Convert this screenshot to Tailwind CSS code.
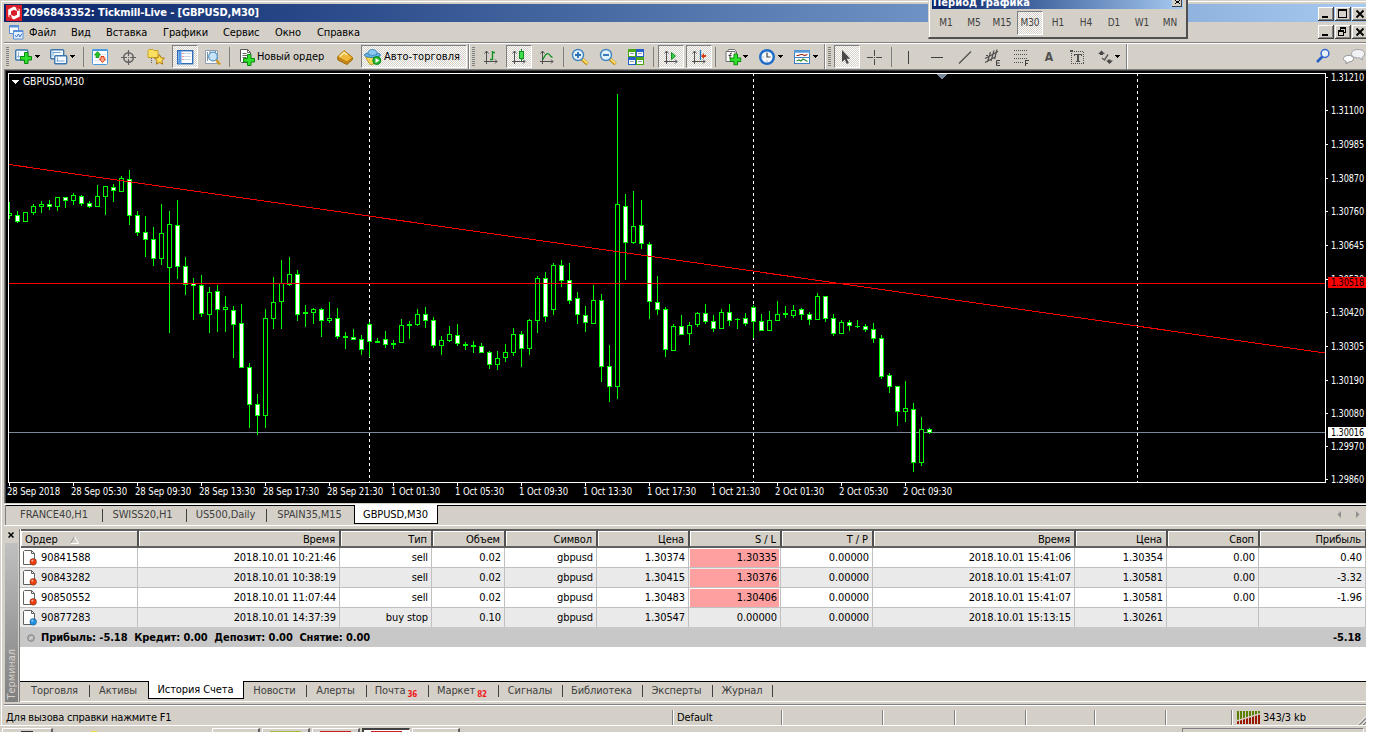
<!DOCTYPE html>
<html lang="ru">

<head>
  <meta charset="UTF-8">
  <meta name="viewport" content="width=device-width, initial-scale=1.0">
  <script src="https://cdn.jsdelivr.net/npm/@tailwindcss/browser@4"></script>
  <title>2096843352: Tickmill-Live - [GBPUSD,M30]</title>
</head>

<body class="bg-white w-[1374px] h-[732px] overflow-hidden text-black text-[11px] leading-[14px] tracking-[-0.1px] font-['DejaVu_Sans_Condensed','DejaVu_Sans',sans-serif] [font-stretch:condensed]">

  <!-- shared icons -->
  <svg class="hidden">
    <symbol id="arrow" viewBox="0 0 6 4"><path d="M0 0h5v1h-5zM1 1h3v1h-3zM2 2h1v1h-1z" fill="#000" shape-rendering="crispEdges" /></symbol>
    <symbol id="plus" viewBox="0 0 12 12"><path d="M4.500 .5h3.500v4h3.500v3.500h-3.500v3.500h-3.500v-3.500h-4v-3.500h4z" fill="#2fe02f" stroke="#0a8a0a" /></symbol>
    <symbol id="axes" viewBox="0 0 18 18"><path d="M4.500 3v13M2 13.500h13M2.500 5.500l2-2.500 2 2.500M13 11.500l2 2-2 2" fill="none" stroke="#505050" /></symbol>
  </svg>

  <div class="relative w-[1366px] h-[732px] bg-[#d4d0c8] flex flex-col overflow-hidden">
    <div class="h-[725px] pl-1 pt-1 flex flex-col shadow-[inset_1px_1px_#d4d0c8,inset_2px_2px_#fff]">

      <!-- title bar -->
      <div class="h-[18px] shrink-0 flex items-center bg-linear-to-r from-[#0a246a] to-[#a6caf0] text-white">
        <svg class="ml-[2px] w-4 h-4" viewBox="0 0 16 16">
          <rect width="16" height="16" fill="#d81e28" />
          <path d="M8 1.500L13.800 4.500V11.500L8 14.500L2.200 11.500V4.500Z" fill="#fff" />
          <path d="M8 4.700L11 6.300V9.700L8 11.300L5 9.700V6.300Z" fill="#d81e28" />
          <path d="M9.500 1l4 4.500-2.500.5zM6.500 15l-4-4.500 2.500-.5z" fill="#d81e28" />
        </svg>
        <span class="ml-px font-bold whitespace-nowrap">2096843352: Tickmill-Live - [GBPUSD,M30]</span>
        <div class="ml-auto flex gap-[1px] mt-[1px]">
          <svg class="w-4 h-[14px]" viewBox="0 0 16 14" shape-rendering="crispEdges"><path d="M0 0h16v14H0z" fill="#404040" /><path d="M0 0h15v13H0z" fill="#fff" /><path d="M1 1h14v12H1z" fill="#808080" /><path d="M1 1h13v11H1z" fill="#d4d0c8" /><path d="M4 9h6v2H4z" /></svg>
          <svg class="w-4 h-[14px]" viewBox="0 0 16 14" shape-rendering="crispEdges"><path d="M0 0h16v14H0z" fill="#404040" /><path d="M0 0h15v13H0z" fill="#fff" /><path d="M1 1h14v12H1z" fill="#808080" /><path d="M1 1h13v11H1z" fill="#d4d0c8" /><path d="M3 2h9v9H3zM4 4v6h7V4z" fill-rule="evenodd" /></svg>
          <svg class="w-[14px] h-[14px]" viewBox="0 0 14 14" shape-rendering="crispEdges"><path d="M0 0h14v14H0z" fill="#404040" /><path d="M0 0h14v13H0z" fill="#fff" /><path d="M1 1h13v12H1z" fill="#808080" /><path d="M1 1h13v11H1z" fill="#d4d0c8" /><path d="M4.500 3.500l7 7M11.500 3.500l-7 7" stroke="#000" stroke-width="1.800" shape-rendering="auto" /></svg>
        </div>
      </div>

      <!-- menu -->
      <div class="h-[20px] shrink-0 flex items-center whitespace-nowrap">
        <svg class="ml-[5px] w-[15px] h-[15px]" viewBox="0 0 15 15"><path d="M.5 .5h9v8h-9z" fill="#fff" stroke="#5b8fd8" /><path d="M.5 1.500h9" stroke="#5b8fd8" stroke-width="2" /><path d="M4.500 5.500h9.500v8.500h-9.500z" fill="#e8f2ff" stroke="#5b8fd8" /><path d="M4.500 6h9.500" stroke="#5b8fd8" stroke-width="2" /><path d="M6 10l1.500 2 2-3 1.500 3 2-3.500" fill="none" stroke="#3a78d0" /></svg>
        <div class="w-[42px] ml-[5px] pt-[2px]">Файл</div>
        <div class="w-[35px] pt-[2px]">Вид</div>
        <div class="w-[57px] pt-[2px]">Вставка</div>
        <div class="w-[60px] pt-[2px]">Графики</div>
        <div class="w-[52px] pt-[2px]">Сервис</div>
        <div class="w-[42px] pt-[2px]">Окно</div>
        <div class="pt-[2px]">Справка</div>
        <div class="ml-auto flex gap-[1px]">
          <svg class="w-4 h-[14px]" viewBox="0 0 16 14" shape-rendering="crispEdges"><path d="M0 0h16v14H0z" fill="#404040" /><path d="M0 0h15v13H0z" fill="#fff" /><path d="M1 1h14v12H1z" fill="#808080" /><path d="M1 1h13v11H1z" fill="#d4d0c8" /><path d="M4 9h6v2H4z" /></svg>
          <svg class="w-4 h-[14px]" viewBox="0 0 16 14" shape-rendering="crispEdges"><path d="M0 0h16v14H0z" fill="#404040" /><path d="M0 0h15v13H0z" fill="#fff" /><path d="M1 1h14v12H1z" fill="#808080" /><path d="M1 1h13v11H1z" fill="#d4d0c8" /><path d="M5 2h6v6H9V7h1V4H6v1H5z" /><path d="M3 5h6v6H3zM4 7v3h4V7z" fill-rule="evenodd" /></svg>
          <svg class="w-[14px] h-[14px]" viewBox="0 0 14 14" shape-rendering="crispEdges"><path d="M0 0h14v14H0z" fill="#404040" /><path d="M0 0h14v13H0z" fill="#fff" /><path d="M1 1h13v12H1z" fill="#808080" /><path d="M1 1h13v11H1z" fill="#d4d0c8" /><path d="M4.500 3.500l7 7M11.500 3.500l-7 7" stroke="#000" stroke-width="1.800" shape-rendering="auto" /></svg>
        </div>
      </div>
      <div class="h-[2px] shrink-0 border-t border-[#808080] bg-white"></div>

      <!-- toolbar -->
      <div class="h-[25px] shrink-0 flex items-center whitespace-nowrap [&>*]:shrink-0">
        <div class="ml-[2px] w-[3px] h-5 bg-[repeating-linear-gradient(#808080_0_1px,#d4d0c8_1px_2px)]"></div>
        <!-- new chart -->
        <svg class="ml-[6px] w-[18px] h-[18px]" viewBox="0 0 18 18"><rect x=".7" y="2" width="12" height="10" rx="1" fill="#f4faff" stroke="#3f78b0" stroke-width="1.400" /><path d="M3.500 4v6M2 8.500h8" stroke="#8ab4dc" /><use href="#plus" x="5" y="4" width="12" height="12" /></svg>
        <svg class="ml-[2px] w-[6px] h-1"><use href="#arrow" /></svg>
        <!-- profiles -->
        <svg class="ml-[9px] w-[18px] h-[18px]" viewBox="0 0 18 18"><rect x=".7" y="1.700" width="13" height="9" rx="1" fill="#f4faff" stroke="#3f78b0" stroke-width="1.400" /><path d="M3 3.500v5M2.500 4.500h8" stroke="#7aa8d4" /><rect x="4.700" y="7.700" width="12" height="8" rx="1" fill="#f4faff" stroke="#3f78b0" stroke-width="1.400" /><path d="M7.500 9.500v4M6.500 13h8" stroke="#7aa8d4" /></svg>
        <svg class="ml-[2px] w-[6px] h-1"><use href="#arrow" /></svg>
        <div class="ml-[7px] w-px h-5 bg-[#808080]"></div>
        <!-- market watch -->
        <svg class="ml-[7px] w-[18px] h-[18px]" viewBox="0 0 18 18"><rect x="1.500" y="1.500" width="15" height="15" rx="1" fill="#fff" stroke="#4a9be0" /><path d="M1.500 2h15" stroke="#4a9be0" stroke-width="2" /><path d="M3 6.500h12M3 9.500h12M3 12.500h12" stroke="#dce8f4" /><path d="M6.500 3.500l3 3.500h-1.500v2.500h-3V7h-1.500z" fill="#22c722" stroke="#0b8a0b" stroke-width=".7" /><path d="M11.500 14.500l3-3.500h-1.500V8.500h-3V11h-1.500z" fill="#ffb090" stroke="#e03a10" /></svg>
        <!-- data window -->
        <svg class="ml-[10px] w-[18px] h-[18px]" viewBox="0 0 18 18"><circle cx="9.500" cy="9.500" r="4.800" fill="none" stroke="#606060" stroke-width="1.500" /><path d="M9.500 2v6M9.500 11v6M2 9.500h6M11 9.500h6M9 9.500h1" stroke="#606060" stroke-width="1.200" /></svg>
        <!-- navigator -->
        <svg class="ml-[10px] w-[18px] h-[18px]" viewBox="0 0 18 18"><path d="M1 2.500l1-1h4l1 1h4v7H1z" fill="#fbdf60" stroke="#c8a020" /><path d="M4.500 10v6" stroke="#606060" stroke-dasharray="1 1" /><path d="M12.500 6.500l1.500 3.300 3.500.4-2.600 2.400.7 3.600-3.100-1.800-3.100 1.800.7-3.600L7.500 10.200l3.500-.4z" fill="#ffe25a" stroke="#b07a10" /></svg>
        <!-- terminal -->
        <div class="ml-[7px] w-[26px] h-[23px] border border-t-[#808080] border-l-[#808080] border-b-white border-r-white bg-[repeating-conic-gradient(#fff_0_25%,#d4d0c8_0_50%)] bg-[length:2px_2px] flex items-center justify-center">
          <svg class="w-[18px] h-[18px]" viewBox="0 0 18 18"><rect x="1.700" y="2.700" width="15" height="13" fill="#fff" stroke="#2f6cb8" stroke-width="1.400" /><path d="M4 3v13" stroke="#5a9ae8" stroke-width="3" /><path d="M8 5.500h7M8 8.500h7M8 11.500h7" stroke="#c4d6e8" /><path d="M6.500 5.500h1M6.500 8.500h1M6.500 11.500h1" stroke="#d03030" /></svg>
        </div>
        <!-- tester -->
        <svg class="ml-[6px] w-[18px] h-[18px]" viewBox="0 0 18 18"><path d="M1.500 2.500h12v13h-12z" fill="#f8fafc" stroke="#90a0b0" /><path d="M3.500 4v9M6 3v4M11.500 3v3" stroke="#7f8fa0" /><path d="M12 12l4 4.500" stroke="#d09a20" stroke-width="2.500" /><circle cx="9" cy="8.500" r="4.300" fill="#c8e4f8" stroke="#5c9ac8" stroke-width="1.300" /></svg>
        <div class="ml-[7px] w-px h-5 bg-[#808080]"></div>
        <!-- new order -->
        <svg class="ml-[9px] w-[18px] h-[20px]" viewBox="0 0 18 20"><path d="M1.500 2.500h7l3 3v10h-9l-1-1z" fill="#fff" stroke="#555" /><path d="M8.500 2.500v3h3M3.500 6.500h4M3.500 8.500h6M3.500 10.500h4" fill="none" stroke="#666" /><use href="#plus" x="4" y="7" width="12" height="12" /></svg>
        <div class="w-[68px]">Новый ордер</div>
        <!-- meta editor -->
        <svg class="ml-[11px] w-[18px] h-[18px]" viewBox="0 0 18 18"><path d="M1.500 9.500L8 3l8.500 6.500v2L11 16.500 2 12z" fill="#c88a18" stroke="#a06808" stroke-linejoin="round" /><path d="M1.500 9L8 2.500l8.500 7-5.500 4.500z" fill="#f0b838" stroke="#b87c10" stroke-linejoin="round" /><path d="M4 8.500L8 4.500l3 2.500" fill="none" stroke="#fff0b0" stroke-width="1.500" /></svg>
        <!-- auto trading -->
        <div class="ml-[7px] w-[106px] h-[23px] border border-t-[#808080] border-l-[#808080] border-b-white border-r-white bg-[repeating-conic-gradient(#fff_0_25%,#d4d0c8_0_50%)] bg-[length:2px_2px] flex items-center">
          <svg class="ml-[2px] w-[18px] h-[18px]" viewBox="0 0 18 18"><path d="M1.500 9h13l-4.500 7-4 .5z" fill="#f6d75c" stroke="#c09820" /><ellipse cx="8.500" cy="7" rx="8" ry="2.500" fill="#6cb4e4" stroke="#2f80b8" /><path d="M4 6.500Q4 1.500 8.500 1.500T13 6.500Q8.500 8.500 4 6.500z" fill="#8cc8f0" stroke="#3f8cc4" /><circle cx="12.800" cy="12.500" r="4" fill="#22b52c" stroke="#0e8a18" /><path d="M11.500 10v5l4-2.500z" fill="#fff" /></svg>
          <span class="ml-[2px] tracking-[0.05px]">Авто-торговля</span>
        </div>
        <div class="ml-px w-[2px] h-[25px] bg-white border-l border-[#808080]"></div>
        <div class="ml-[2px] w-[3px] h-5 bg-[repeating-linear-gradient(#808080_0_1px,#d4d0c8_1px_2px)]"></div>
        <!-- chart kinds -->
        <svg class="ml-[7px] w-[18px] h-[18px]" viewBox="0 0 18 18"><use href="#axes" /><path d="M10.500 3v9M8 11.500h2.500M10.500 4.500h2.500" fill="none" stroke="#109020" stroke-width="1.400" /></svg>
        <div class="ml-[6px] w-[26px] h-[23px] border border-t-[#808080] border-l-[#808080] border-b-white border-r-white bg-[repeating-conic-gradient(#fff_0_25%,#d4d0c8_0_50%)] bg-[length:2px_2px] flex items-center justify-center">
          <svg class="w-[18px] h-[18px]" viewBox="0 0 18 18"><use href="#axes" /><path d="M11.500 1v12" stroke="#109020" /><rect x="9.500" y="3.500" width="4" height="7" fill="#3be04a" stroke="#109020" /></svg>
        </div>
        <svg class="ml-[6px] w-[18px] h-[18px]" viewBox="0 0 18 18"><use href="#axes" /><path d="M5 11.500Q9 2 12.500 8l2 1.500" fill="none" stroke="#109020" stroke-width="1.300" /></svg>
        <div class="ml-[7px] w-px h-5 bg-[#808080]"></div>
        <!-- zoom -->
        <svg class="ml-[7px] w-[18px] h-[18px]" viewBox="0 0 18 18"><path d="M11 11l5.500 5" stroke="#b8860b" stroke-width="3.500" /><path d="M11.500 11l5 4.500" stroke="#ffe070" stroke-width="1.800" /><circle cx="7" cy="7" r="5.500" fill="#e2f2fc" stroke="#3f84bc" stroke-width="1.400" /><path d="M7 4v6M4 7h6" stroke="#2a70b0" stroke-width="1.800" /></svg>
        <svg class="ml-[10px] w-[18px] h-[18px]" viewBox="0 0 18 18"><path d="M11 11l5.500 5" stroke="#b8860b" stroke-width="3.500" /><path d="M11.500 11l5 4.500" stroke="#ffe070" stroke-width="1.800" /><circle cx="7" cy="7" r="5.500" fill="#e2f2fc" stroke="#3f84bc" stroke-width="1.400" /><path d="M4 7h6" stroke="#2a70b0" stroke-width="1.800" /></svg>
        <!-- tile windows -->
        <svg class="ml-[10px] w-[18px] h-[18px]" viewBox="0 0 18 18" shape-rendering="crispEdges"><path d="M1 1h8v8H1zM9 9h8v8H9z" fill="#4aa816" /><path d="M9 1h8v8H9zM1 9h8v8H1z" fill="#2560c8" /><path d="M2 4h6v4H2zM10 4h6v4h-6zM2 12h6v4H2zM10 12h6v4h-6z" fill="#fff" /><path d="M3 5h4v1H3zM11 5h4v1h-4zM3 13h4v1H3zM11 13h4v1h-4z" fill="#88a8b8" /></svg>
        <div class="ml-[8px] w-px h-5 bg-[#808080]"></div>
        <!-- auto scroll, chart shift -->
        <div class="ml-[4px] w-[26px] h-[23px] border border-t-[#808080] border-l-[#808080] border-b-white border-r-white bg-[repeating-conic-gradient(#fff_0_25%,#d4d0c8_0_50%)] bg-[length:2px_2px] flex items-center justify-center">
          <svg class="w-[18px] h-[18px]" viewBox="0 0 18 18"><use href="#axes" /><path d="M9.500 4.500v7l4-3.500z" fill="#38d048" stroke="#109020" /></svg>
        </div>
        <div class="ml-[2px] w-[26px] h-[23px] border border-t-[#808080] border-l-[#808080] border-b-white border-r-white bg-[repeating-conic-gradient(#fff_0_25%,#d4d0c8_0_50%)] bg-[length:2px_2px] flex items-center justify-center">
          <svg class="w-[18px] h-[18px]" viewBox="0 0 18 18"><use href="#axes" /><path d="M10.500 2v10" stroke="#1870b8" stroke-width="1.300" /><path d="M11 8l3-3v2h2v2h-2v2z" fill="#d83a10" /></svg>
        </div>
        <div class="ml-[3px] w-px h-5 bg-[#808080]"></div>
        <!-- indicators -->
        <svg class="ml-[8px] w-[18px] h-[20px]" viewBox="0 0 18 20"><path d="M4.500 2.500h6l2 2v10h-9.500v-9z" fill="#fff" stroke="#707070" /><path d="M2 4.500h9v10H2z" fill="#fff" stroke="#707070" /><path d="M8 6Q6 5.500 6 8v4M4.500 8.500h3" stroke="#444" fill="none" /><use href="#plus" x="5.500" y="6.500" width="12" height="12" /></svg>
        <svg class="ml-[1px] w-[6px] h-1"><use href="#arrow" /></svg>
        <!-- periods -->
        <svg class="ml-[9px] w-[18px] h-[18px]" viewBox="0 0 18 18"><circle cx="9" cy="9" r="6.800" fill="#f4f8fc" stroke="#1f6cc8" stroke-width="2.400" /><path d="M9 4.500V9h3.500" fill="none" stroke="#444" stroke-width="1.200" /><path d="M4.500 9h1M9 12.500v1" stroke="#888" /></svg>
        <svg class="ml-[2px] w-[6px] h-1"><use href="#arrow" /></svg>
        <!-- templates -->
        <svg class="ml-[9px] w-[18px] h-[18px]" viewBox="0 0 18 18"><rect x="1.500" y="2.500" width="15" height="13" fill="#fff" stroke="#3f80c0" /><path d="M1 3.500h16" stroke="#5a9ad8" stroke-width="2.500" /><path d="M3.500 7.500h2l2-1h2l2 1 3-1" fill="none" stroke="#a83020" stroke-width="1.200" /><path d="M1.500 9.500h15" stroke="#3f80c0" /><path d="M3.500 13l2.500-1 2 1 2-2 2 1 2.500 1.500" fill="none" stroke="#309030" stroke-width="1.200" /></svg>
        <svg class="ml-[2px] w-[6px] h-1"><use href="#arrow" /></svg>
        <div class="ml-[5px] w-[2px] h-[25px] bg-white border-l border-[#808080]"></div>
        <div class="ml-[2px] w-[3px] h-5 bg-[repeating-linear-gradient(#808080_0_1px,#d4d0c8_1px_2px)]"></div>
        <!-- cursor -->
        <div class="ml-[3px] w-[26px] h-[23px] border border-t-[#808080] border-l-[#808080] border-b-white border-r-white bg-[repeating-conic-gradient(#fff_0_25%,#d4d0c8_0_50%)] bg-[length:2px_2px] flex items-center justify-center">
          <svg class="w-[18px] h-[18px]" viewBox="0 0 18 18"><path d="M4 2v12l2.800-2.500 2 4.500 2-1-2-4.200h3.500z" fill="#484848" /></svg>
        </div>
        <svg class="ml-[5px] w-[18px] h-[18px]" viewBox="0 0 18 18"><path d="M9.500 2v6M9.500 11v6M2 9.500h6M11 9.500h6M9 9.500h1" stroke="#484848" /></svg>
        <div class="ml-[8px] w-px h-5 bg-[#808080]"></div>
        <!-- lines -->
        <svg class="ml-[7px] w-[18px] h-[18px]" viewBox="0 0 18 18"><path d="M9.500 3v13" stroke="#404040" /></svg>
        <svg class="ml-[11px] w-[18px] h-[18px]" viewBox="0 0 18 18"><path d="M3 9.500h12" stroke="#404040" /></svg>
        <svg class="ml-[10px] w-[18px] h-[18px]" viewBox="0 0 18 18"><path d="M3 15.500L15 3.500" stroke="#505050" stroke-width="1.200" /></svg>
        <svg class="ml-[10px] w-[18px] h-[18px]" viewBox="0 0 18 18"><path d="M1 10.500L14 3.500M1 14.500L12 8.500M3.500 14l3-10M7 13l3-10.500M10.500 11l2.500-9.500M2 7.500h2" stroke="#505050" stroke-width="1.200" /><path d="M16 12.500h-3.500v5H16M12.500 15h3" fill="none" stroke="#404040" /></svg>
        <svg class="ml-[11px] w-[18px] h-[18px]" viewBox="0 0 18 18" shape-rendering="crispEdges"><path d="M1 2.500h14M1 6.500h14M1 10.500h14M1 14.500h9" stroke="#505050" stroke-dasharray="1 1" /><path d="M12.500 18v-5.500H16M12.500 15.500H15" fill="none" stroke="#404040" /></svg>
        <div class="ml-[9px] w-[18px] text-center text-[12px] font-bold text-[#505050]">A</div>
        <svg class="ml-[10px] w-[18px] h-[18px]" viewBox="0 0 18 18" shape-rendering="crispEdges"><rect x="3.500" y="3.500" width="12" height="12" fill="none" stroke="#505050" stroke-dasharray="1 1" /><path d="M2 2h3v2H2zM6 6h8v2h-1V7h-2v6h1v1H8v-1h1V7H7v1H6z" fill="#505050" /></svg>
        <svg class="ml-[11px] w-[18px] h-[18px]" viewBox="0 0 18 18"><path d="M1 6l3.500-3.500L8 6H6v1H3V6zM9 12.500h2v-1h2.500v1H16L12.500 16z" fill="#484848" /><path d="M5 10l2.500 2L11 6.500" fill="none" stroke="#585858" stroke-width="1.400" /></svg>
        <svg class="w-[6px] h-1"><use href="#arrow" /></svg>
        <div class="ml-[5px] w-[2px] h-[25px] bg-white border-l border-[#808080]"></div>
        <svg class="ml-auto w-[18px] h-[18px]" viewBox="0 0 18 18"><path d="M7.500 8.500L2 14" stroke="#2860c8" stroke-width="2.600" /><circle cx="10" cy="5.500" r="3.900" fill="#e8f2fc" stroke="#3468cc" stroke-width="1.500" /></svg>
        <svg class="ml-[9px] w-6 h-[18px]" viewBox="0 0 24 18"><path d="M16 1.500c4 0 6.500 1.800 6.500 4.300 0 2-1.200 3-2.500 3.600l.5 2.600-3-2.100c-5 .3-8-1.600-8-4.100 0-2.500 2.500-4.300 6.500-4.300z" fill="#f2f2f4" stroke="#a0a0a8" /><path d="M6.500 7.500c3 0 5 1.200 5 3.200s-2 3.200-4.500 3.200L4 16l.3-2.500C2.500 13 1.500 12 1.500 10.700c0-2 2-3.200 5-3.200z" fill="#fff" stroke="#909098" /></svg>
      </div>

      <!-- chart -->
      <div class="h-[434px] shrink-0 border-t border-l border-[#808080]">
        <div class="h-[433px] border-t border-l border-[#404040] bg-black">
          <svg id="chart" class="block w-[1360px] h-[432px] text-[10px]" viewBox="6 71 1360 432" shape-rendering="crispEdges">
            <path d="M8.500 482.500V73.500H1325.500V482.500Z" fill="none" stroke="#fff" />
            <path d="M369.500 73V482M753.500 73V482M1137.500 73V482" stroke="#fff" stroke-dasharray="3 3" />
            <path d="M936 74h11l-5.500 5.500z" fill="#778899" />
            <path d="M9 432.500H1325" stroke="#778899" />
            <g id="candles"></g>
            <path d="M9 283.500H1325" stroke="#f00" />
            <path d="M9 164.500L1325 353" stroke="#f00" />
            <g id="axis" fill="#fff"></g>
            <path d="M1328 277h38v11h-38z" fill="#f00" />
            <path d="M1328 427h38v11h-38z" fill="#fff" />
            <text x="1331" y="286" textLength="33" lengthAdjust="spacingAndGlyphs">1.30518</text>
            <text x="1331" y="436" textLength="33" lengthAdjust="spacingAndGlyphs">1.30016</text>
            <path d="M12 80h7v1h-1v1h-1v1h-1v1h-1v-1h-1v-1h-1v-1h-1z" fill="#fff" />
            <text x="23" y="85" fill="#fff" textLength="61" lengthAdjust="spacingAndGlyphs">GBPUSD,M30</text>
          </svg>
        </div>
      </div>

      <!-- chart tabs -->
      <div class="h-[26px] shrink-0 pt-[1px]">
        <div class="h-px bg-white"></div>
        <div class="ml-px h-[20px] flex border-l border-[#808080] text-[#404040] text-center whitespace-nowrap">
          <div class="w-[97px] border-t border-black pt-[3px]"><span class="block h-[13px] border-r border-[#404040] leading-[12px]">FRANCE40,H1</span></div>
          <div class="w-[84px] border-t border-black pt-[3px]"><span class="block h-[13px] border-r border-[#404040] leading-[12px] pr-[4px]">SWISS20,H1</span></div>
          <div class="w-[80px] border-t border-black pt-[3px]"><span class="block h-[13px] border-r border-[#404040] leading-[12px] pr-[2px]">US500,Daily</span></div>
          <div class="w-[87px] border-t border-black pt-[3px] pr-[2px] leading-[12px]">SPAIN35,M15</div>
          <div class="w-[84px] h-[19px] bg-white text-black border-x border-b border-black leading-[19px] pr-px">GBPUSD,M30</div>
          <div class="grow border-t border-black flex items-center justify-end">
            <svg class="mr-[5px] mb-[3px] w-[24px] h-[7px]" viewBox="0 0 24 7"><path d="M4 0v7L.5 3.500zM19 0v7l3.500-3.500z" fill="#909090" /></svg>
          </div>
        </div>
        <div class="h-px bg-white"></div>
      </div>

      <!-- terminal -->
      <div class="h-[173px] shrink-0 flex">
        <div class="w-[15px] flex flex-col">
          <svg class="ml-[4px] mt-[3px] w-[6px] h-[6px]" viewBox="0 0 6 6"><path d="M.5 .5l5 5M5.500 .5l-5 5" stroke="#000" stroke-width="1.500" /></svg>
          <div class="ml-[1px] mt-[5px] w-[13px] h-[159px] bg-linear-to-b from-[#c0c0c0] to-[#808080] flex items-end text-[#d4d0c8]">
            <span class="[writing-mode:vertical-rl] rotate-180 leading-[13px] pt-[3px]">Терминал</span>
          </div>
        </div>
        <div class="w-[1347px] flex flex-col border-l border-[#808080]">
          <div class="h-[152px] bg-white">
            <table class="w-[1346px] table-fixed border-separate border-spacing-0 text-right whitespace-nowrap [&_td]:h-[20px] [&_td]:p-0 [&_td]:pr-[3px] [&_td]:border-r [&_td]:border-b [&_td]:border-[#c0c0c0] [&_th]:relative [&_th]:left-px [&_th]:h-[19px] [&_th]:p-0 [&_th]:pr-[4px] [&_th]:pt-[2px] [&_th]:leading-[12px] [&_th]:font-normal [&_th]:border-t-2 [&_th]:border-t-[#606060] [&_th]:border-r-2 [&_th]:border-r-[#505050] [&_th]:border-b-2 [&_th]:border-b-[#606060] [&_th]:bg-[#d4d0c8] [&_th]:shadow-[inset_1px_1px_#fff]">
              <colgroup>
                <col class="w-[118px]"><col class="w-[202px]"><col class="w-[92px]"><col class="w-[73px]"><col class="w-[92px]"><col class="w-[92px]"><col class="w-[92px]"><col class="w-[92px]"><col class="w-[202px]"><col class="w-[92px]"><col class="w-[92px]"><col class="w-[107px]">
              </colgroup>
              <thead>
                <tr>
                  <th><div class="flex items-center pl-[4px]">Ордер<svg class="ml-[12px] w-[9px] h-[8px]" viewBox="0 0 9 8"><path d="M4.500 .5L.5 7.500" stroke="#909090" /><path d="M4.500 .5l4 7h-8" fill="none" stroke="#fff" /></svg></div></th>
                  <th>Время</th>
                  <th>Тип</th>
                  <th>Объем</th>
                  <th>Символ</th>
                  <th>Цена</th>
                  <th>S / L</th>
                  <th>T / P</th>
                  <th>Время</th>
                  <th>Цена</th>
                  <th>Своп</th>
                  <th>Прибыль</th>
                </tr>
              </thead>
              <tbody id="orders"></tbody>
            </table>
            <div class="relative -mt-px h-[20px] bg-[#c8c8c8] flex items-center font-bold pt-px pr-[5px] whitespace-pre">
              <svg class="ml-[7px] mr-[6px] w-[8px] h-[8px]" viewBox="0 0 8 8"><circle cx="4" cy="4" r="3.300" fill="#b8b8b8" stroke="#808080" /><path d="M2.500 5.500l3-3" stroke="#e8e8e8" /></svg>
              <span class="tracking-[-0.08px]">Прибыль: -5.18  Кредит: 0.00  Депозит: 0.00  Снятие: 0.00</span>
              <span class="ml-auto">-5.18</span>
            </div>
          </div>
          <!-- terminal tabs -->
          <div class="h-[20px] flex text-[#404040] text-center whitespace-nowrap">
            <div class="w-[70px] border-t border-black pt-[3px]"><span class="block h-3 border-r border-[#404040] leading-[12px]">Торговля</span></div>
            <div class="w-[58px] border-t border-black pt-[3px]"><span class="block leading-[12px] pr-[2px]">Активы</span></div>
            <div class="w-[96px] h-[18px] bg-white text-black border-x border-b border-black leading-[18px] pr-px">История Счета</div>
            <div class="w-[63px] border-t border-black pt-[3px]"><span class="block h-3 border-r border-[#404040] leading-[12px] pr-px">Новости</span></div>
            <div class="w-[60px] border-t border-black pt-[3px]"><span class="block h-3 border-r border-[#404040] leading-[12px] pr-[2px]">Алерты</span></div>
            <div class="w-[62px] border-t border-black pt-[3px]"><span class="h-3 border-r border-[#404040] leading-[12px] flex justify-center gap-[2px] pr-[3px]">Почта<b class="text-[8px] text-[#f02020] pt-[4px]">36</b></span></div>
            <div class="w-[70px] border-t border-black pt-[3px]"><span class="h-3 border-r border-[#404040] leading-[12px] flex justify-center gap-[2px] pr-[3px]">Маркет<b class="text-[8px] text-[#f02020] pt-[4px]">82</b></span></div>
            <div class="w-[64px] border-t border-black pt-[3px]"><span class="block h-3 border-r border-[#404040] leading-[12px] pr-px">Сигналы</span></div>
            <div class="w-[80px] border-t border-black pt-[3px]"><span class="block h-3 border-r border-[#404040] leading-[12px] pr-[2px]">Библиотека</span></div>
            <div class="w-[70px] border-t border-black pt-[3px]"><span class="block h-3 border-r border-[#404040] leading-[12px] pr-[2px]">Эксперты</span></div>
            <div class="w-[60px] border-t border-black pt-[3px]"><span class="block h-3 border-r border-[#404040] leading-[12px] pr-px">Журнал</span></div>
            <div class="grow border-t border-black"></div>
          </div>
          <div class="h-px bg-white"></div>
        </div>
      </div>

      <!-- status bar -->
      <div class="mt-[2px] h-[2px] shrink-0 border-t border-[#808080] bg-white"></div>
      <div class="h-[19px] shrink-0 flex items-center whitespace-nowrap pt-[3px]">
        <div class="w-[668px] pl-[2px] pt-[2px] tracking-[-0.2px]">Для вызова справки нажмите F1</div>
        <div class="w-[109px] h-[15px] border-l border-[#808080] shadow-[inset_1px_0_#fff] pl-[4px] pt-[1px]">Default</div>
        <div class="w-[101px] h-[15px] border-l border-[#808080] shadow-[inset_1px_0_#fff]"></div>
        <div class="w-[72px] h-[15px] border-l border-[#808080] shadow-[inset_1px_0_#fff]"></div>
        <div class="w-[71px] h-[15px] border-l border-[#808080] shadow-[inset_1px_0_#fff]"></div>
        <div class="w-[69px] h-[15px] border-l border-[#808080] shadow-[inset_1px_0_#fff]"></div>
        <div class="w-[71px] h-[15px] border-l border-[#808080] shadow-[inset_1px_0_#fff]"></div>
        <div class="w-[66px] h-[15px] border-l border-[#808080] shadow-[inset_1px_0_#fff]"></div>
        <div class="grow h-[15px] border-l border-[#808080] shadow-[inset_1px_0_#fff] pl-[5px] flex items-center">
          <svg class="w-[23px] h-[13px]" viewBox="0 0 23 13"><path d="M0 0h23v2L0 9z" fill="#5a8000" /><path d="M0 10.500L23 3.500v9.500H0z" fill="#981800" /><path d="M2.500 0v13M5.500 0v13M8.500 0v13M11.500 0v13M14.500 0v13M17.500 0v13M20.500 0v13" stroke="#d4d0c8" /></svg>
          <span class="ml-[3px] pt-[2px]">343/3 kb</span>
          <svg class="ml-auto w-[8px] h-[9px] self-end" viewBox="0 0 8 9"><path d="M1 9l7-7M5 9l3-3" stroke="#808080" stroke-width="1.500" /><path d="M0 8.500l8-8M4 8.500l4-4" stroke="#fff" /></svg>
        </div>
      </div>
    </div>

    <!-- taskbar -->
    <div class="h-[7px] border-t border-white pt-[2px] flex overflow-hidden">
      <div class="ml-[2px] w-[51px] border-t border-l border-white border-r-2 border-r-[#606060] pt-[2px] px-[18px]"><div class="h-px bg-[#303030]"></div></div>
      <div class="ml-[38px] mt-[3px] w-[6px] h-[1px] bg-[#f0e040]"></div>
      <div class="ml-[115px] w-[48px] border-t border-l border-white border-r-2 border-r-[#606060]"></div>
      <div class="ml-[2px] w-[48px] border-t border-l border-white border-r-2 border-r-[#606060] pt-[2px] px-[7px]"><div class="h-px bg-[#a8b840]"></div></div>
      <div class="ml-[2px] w-[48px] border-t border-l border-white border-r-2 border-r-[#606060] pt-[2px] px-[7px]"><div class="h-px bg-[#c82020]"></div></div>
      <div class="ml-[2px] w-[48px] border-t-2 border-l-2 border-[#404040] border-r border-r-white bg-white pt-[1px] px-[7px]"><div class="h-px bg-[#c82020]"></div></div>
      <div class="ml-[2px] w-[48px] border-t border-l border-white border-r-2 border-r-[#606060]"></div>
      <div class="ml-auto mr-[2px] w-[182px] border-t border-l border-[#808080] border-r border-r-white"></div>
    </div>

    <!-- periods palette -->
    <div class="absolute left-[928px] top-0 w-[260px] h-[39px] bg-[#d4d0c8] border-l border-l-[#d4d0c8] border-r-2 border-r-[#505050] border-b-2 border-b-[#505050] shadow-[inset_1px_0_#fff] px-[3px]">
      <div class="h-[9px] overflow-hidden bg-linear-to-r from-[#0a246a] to-[#a6caf0] flex items-start justify-between">
        <span class="ml-px -mt-[4px] font-bold text-white whitespace-nowrap tracking-[0.05px]">Период графика</span>
        <svg class="mr-[1px] w-[10px] h-[7px]" viewBox="0 0 10 7" shape-rendering="crispEdges"><path d="M0 0h10v7H0z" fill="#404040" /><path d="M0 0h9v6H0z" fill="#d4d0c8" /><path d="M2.500 4.500l3-3 3 3M3 0l2.500 2L8 0" fill="none" stroke="#000" /></svg>
      </div>
      <div class="mt-[2px] grid grid-cols-[repeat(9,28px)] h-[23px] text-[10px] leading-[24px] text-center text-[#404040]">
        <div>M1</div>
        <div>M5</div>
        <div>M15</div>
        <div class="mx-px leading-[22px] border border-t-[#808080] border-l-[#808080] border-b-white border-r-white bg-[repeating-conic-gradient(#fff_0_25%,#d4d0c8_0_50%)] bg-[length:2px_2px]">M30</div>
        <div>H1</div>
        <div>H4</div>
        <div>D1</div>
        <div>W1</div>
        <div>MN</div>
      </div>
    </div>
  </div>

  <script>
    // high, body top, body bottom, low, falling; one bar every 8px
    const bars = [
      [202, 213, 216, 219, 0], [211, 215, 222, 223, 1], [212, 212, 222, 222, 0], [204, 206, 213, 215, 0], [201, 204, 207, 213, 0],
      [200, 204, 207, 210, 1], [197, 197, 207, 211, 0], [197, 197, 201, 208, 1], [193, 195, 201, 205, 0], [195, 196, 204, 206, 1],
      [201, 203, 207, 208, 1], [185, 196, 207, 207, 0], [186, 186, 197, 215, 0], [184, 187, 191, 202, 1], [176, 178, 192, 192, 0],
      [170, 179, 216, 225, 1], [211, 215, 233, 236, 1], [216, 232, 240, 257, 1], [227, 239, 259, 266, 1], [204, 233, 259, 265, 0],
      [211, 224, 268, 333, 0], [200, 225, 267, 279, 1], [257, 266, 285, 295, 1], [278, 283, 286, 320, 1], [275, 285, 314, 317, 1],
      [287, 292, 315, 333, 0], [285, 291, 310, 332, 1], [296, 307, 310, 332, 0], [306, 310, 325, 358, 1], [304, 323, 368, 368, 1],
      [363, 367, 405, 428, 1], [394, 404, 416, 435, 1], [309, 318, 416, 428, 0], [277, 302, 319, 329, 0], [260, 283, 302, 329, 0],
      [257, 274, 285, 286, 0], [270, 274, 315, 321, 1], [305, 312, 314, 327, 1], [308, 309, 313, 324, 0], [308, 309, 321, 337, 1],
      [302, 318, 321, 323, 0], [308, 318, 337, 339, 1], [332, 336, 338, 349, 1], [329, 337, 340, 340, 1], [335, 339, 350, 355, 1],
      [322, 324, 342, 357, 1], [338, 341, 343, 343, 1], [331, 339, 345, 348, 1], [340, 343, 345, 349, 1], [319, 325, 343, 343, 0],
      [321, 324, 326, 339, 0], [309, 314, 325, 326, 0], [307, 314, 321, 328, 1], [317, 320, 346, 348, 1], [336, 340, 346, 355, 0],
      [326, 334, 341, 342, 0], [324, 335, 344, 346, 1], [342, 344, 346, 350, 1], [341, 345, 347, 353, 1], [343, 346, 353, 353, 1],
      [351, 352, 365, 369, 1], [351, 358, 365, 370, 0], [344, 352, 358, 362, 0], [328, 334, 353, 356, 0], [331, 334, 349, 367, 1],
      [319, 320, 349, 355, 0], [276, 278, 321, 333, 0], [272, 278, 317, 322, 1], [263, 265, 310, 315, 0], [260, 265, 281, 287, 1],
      [263, 280, 301, 304, 1], [292, 298, 315, 324, 1], [306, 315, 323, 332, 1], [285, 300, 324, 324, 0], [294, 300, 367, 382, 1],
      [345, 366, 387, 402, 1], [94, 204, 387, 399, 0], [194, 206, 243, 280, 1], [191, 226, 243, 244, 0], [200, 225, 244, 249, 1],
      [242, 244, 302, 319, 1], [276, 302, 310, 315, 1], [307, 309, 350, 357, 1], [324, 326, 351, 351, 0], [315, 326, 335, 335, 1],
      [322, 325, 334, 345, 0], [312, 313, 325, 327, 0], [304, 313, 322, 324, 1], [315, 321, 329, 332, 1], [309, 312, 329, 329, 0],
      [304, 312, 321, 326, 1], [318, 319, 320, 329, 1], [313, 318, 324, 326, 1], [305, 307, 322, 338, 1], [314, 321, 331, 331, 1],
      [311, 320, 331, 331, 0], [301, 314, 321, 321, 0], [306, 313, 315, 318, 0], [305, 310, 316, 318, 0], [308, 309, 315, 320, 1],
      [312, 314, 320, 325, 1], [293, 296, 320, 320, 0], [296, 296, 319, 322, 1], [314, 318, 334, 336, 1], [320, 322, 334, 334, 0],
      [320, 322, 326, 331, 1], [320, 326, 327, 328, 1], [324, 326, 330, 332, 1], [323, 329, 339, 343, 1], [335, 338, 377, 379, 1],
      [373, 375, 387, 393, 1], [386, 386, 412, 426, 1], [381, 408, 412, 422, 0], [403, 409, 463, 472, 1], [417, 429, 463, 466, 0],
      [428, 429, 433, 434, 1],
    ];
    document.getElementById("candles").innerHTML = bars.map(([high, top, bottom, low, falling], i) => {
      const x = 9 + i * 8;
      const left = i ? x - 2 : x;
      const width = i ? 5 : 3;
      let out = `<rect x="${x}" y="${high}" width="1" height="${low - high}" fill="#0f0"/>`;
      out += `<rect x="${left}" y="${top}" width="${width}" height="${bottom - top}" fill="#0f0"/>`;
      if (bottom - top > 2) {
        out += `<rect x="${left + (i ? 1 : 0)}" y="${top + 1}" width="${i ? 3 : 2}" height="${bottom - top - 2}" fill="${falling ? "#fff" : "#000"}"/>`;
      }
      return out;
    }).join("");

    const prices = [["1.31210", 77], ["1.31100", 110], ["1.30985", 144], ["1.30870", 178], ["1.30760", 211], ["1.30645", 245], ["1.30530", 279],
      ["1.30420", 312], ["1.30305", 346], ["1.30190", 380], ["1.30080", 413], ["1.29970", 446], ["1.29860", 479]];
    const dates = ["28 Sep 2018", "28 Sep 05:30", "28 Sep 09:30", "28 Sep 13:30", "28 Sep 17:30", "28 Sep 21:30", "1 Oct 01:30", "1 Oct 05:30",
      "1 Oct 09:30", "1 Oct 13:30", "1 Oct 17:30", "1 Oct 21:30", "2 Oct 01:30", "2 Oct 05:30", "2 Oct 09:30"];
    document.getElementById("axis").innerHTML =
      prices.map(([label, y]) => `<rect x="1326" y="${y}" width="2" height="1"/><text x="1331" y="${y + 4}" textLength="33" lengthAdjust="spacingAndGlyphs">${label}</text>`).join("") +
      dates.map((label, i) => `<rect x="${9 + i * 64}" y="483" width="1" height="3"/><text x="${7 + i * 64}" y="495" textLength="${i == 0 ? 53 : i < 6 ? 56 : 49}" lengthAdjust="spacingAndGlyphs">${label}</text>`).join("");

    const orders = [
      ["90841588", "2018.10.01 10:21:46", "sell", "0.02", "gbpusd", "1.30374", "1.30335", "0.00000", "2018.10.01 15:41:06", "1.30354", "0.00", "0.40"],
      ["90843282", "2018.10.01 10:38:19", "sell", "0.02", "gbpusd", "1.30415", "1.30376", "0.00000", "2018.10.01 15:41:07", "1.30581", "0.00", "-3.32"],
      ["90850552", "2018.10.01 11:07:44", "sell", "0.02", "gbpusd", "1.30483", "1.30406", "0.00000", "2018.10.01 15:41:07", "1.30581", "0.00", "-1.96"],
      ["90877283", "2018.10.01 14:37:39", "buy stop", "0.10", "gbpusd", "1.30547", "0.00000", "0.00000", "2018.10.01 15:13:15", "1.30261", "", ""],
    ];
    document.getElementById("orders").innerHTML = orders.map((row, i) => {
      const ball = row[2] == "sell" ? "#e84010" : "#2090e0";
      const icon = `<svg class="ml-[3px] mr-[4px] w-[14px] h-[16px]" viewBox="0 0 14 16"><path d="M.5 1.500l1-1h7l3 3v11h-11z" fill="#fff" stroke="#606060"/><path d="M8.500 .5v3h3" fill="none" stroke="#606060"/><circle cx="10.200" cy="11.800" r="3.400" fill="${ball}" stroke="#00000060" stroke-width=".7"/><circle cx="9.300" cy="10.800" r="1" fill="#ffffff90"/></svg>`;
      return `<tr class="${i % 2 ? "bg-[#eaeaea]" : "bg-white"}">` + row.map((cell, c) => {
        if (c == 0) return `<td><div class="flex items-center">${icon}${cell}</div></td>`;
        if (c == 6 && i < 3) return `<td><div class="ml-px -mr-[2px] h-[18px] pr-[2px] leading-[18px] bg-[#ffa0a0]">${cell}</div></td>`;
        return `<td>${cell}</td>`;
      }).join("") + "</tr>";
    }).join("");
  </script>
</body>

</html>
